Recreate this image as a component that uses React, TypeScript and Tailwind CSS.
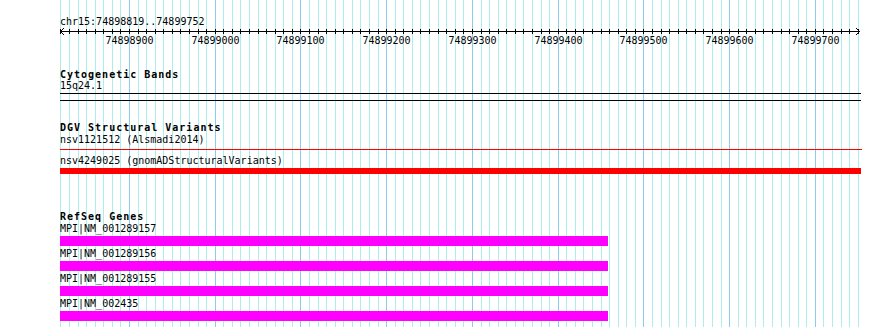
import React from "react";

const START = 74898819;
const END = 74899752;
const X0 = 60;
const W = 800;
const sx = (b: number) => Math.floor(X0 + ((b - START) * W) / (END - START));

const ticks: number[] = [];
for (let b = 74898820; b <= 74899750; b += 10) ticks.push(b);
const majors = ticks.filter((b) => b % 100 === 0);

const genes = ["MPI|NM_001289157", "MPI|NM_001289156", "MPI|NM_001289155", "MPI|NM_002435"];

export default function App() {
  return (
    <div className="relative w-[890px] h-[327px] overflow-hidden bg-white text-black text-[10px] leading-[10px] font-['DejaVu_Sans_Mono',monospace]">
      <svg className="absolute inset-0" width={890} height={327}>
        {ticks.map((b) => (
          <line
            key={b}
            x1={sx(b) + 0.5}
            x2={sx(b) + 0.5}
            y1={0}
            y2={327}
            stroke={b % 100 === 0 ? "#88ccee" : "#aaeeee"}
            strokeWidth={1}
          />
        ))}
      </svg>
      <div className="relative flex flex-col pl-[60px] w-[861px]">
        <div className="mt-[17px] h-[10px] whitespace-nowrap">chr15:74898819..74899752</div>
        <svg width={801} height={9} className="block">
          <line x1={0} x2={800} y1={4.5} y2={4.5} stroke="#000" strokeWidth={1} />
          {ticks.map((b) => (
            <line key={b} x1={sx(b) - 60 + 0.5} x2={sx(b) - 60 + 0.5} y1={2} y2={7} stroke="#000" strokeWidth={1} />
          ))}
          <polyline points="4,1 0.5,4.5 4,8" fill="none" stroke="#000" strokeWidth={1} />
          <polyline points="796,1 799.5,4.5 796,8" fill="none" stroke="#000" strokeWidth={1} />
        </svg>
        <div className="relative h-[10px]">
          {majors.map((b) => (
            <span key={b} className="absolute top-0 w-[60px] text-center" style={{ left: sx(b) - 60 - 30 + 0.5 }}>
              {b}
            </span>
          ))}
        </div>
        <div className="mt-[24px] h-[11px] font-bold tracking-[1px] whitespace-nowrap">Cytogenetic Bands</div>
        <div className="h-[10px] whitespace-nowrap">15q24.1</div>
        <div className="mt-[2px] h-px w-[801px] bg-black" />
        <div className="mt-[6px] h-px w-[801px] bg-black" />
        <div className="mt-[22px] h-[12px] font-bold tracking-[1px] whitespace-nowrap">DGV Structural Variants</div>
        <div className="h-[10px] whitespace-nowrap">nsv1121512 (Alsmadi2014)</div>
        <div className="mt-[4px] h-px w-[802px] bg-[#ff0000]" />
        <div className="mt-[6px] h-[10px] whitespace-nowrap">nsv4249025 (gnomADStructuralVariants)</div>
        <div className="mt-[2px] h-[6px] w-[801px] bg-[#ff0000]" />
        <div className="mt-[38px] h-[12px] font-bold tracking-[1px] whitespace-nowrap">RefSeq Genes</div>
        <div className="flex flex-col gap-[3px]">
          {genes.map((g) => (
            <div key={g} className="flex flex-col">
              <div className="relative z-10 h-[12px] whitespace-nowrap">{g}</div>
              <div className="h-[10px] w-[548px] bg-[#ff00ff]" />
            </div>
          ))}
        </div>
      </div>
    </div>
  );
}
